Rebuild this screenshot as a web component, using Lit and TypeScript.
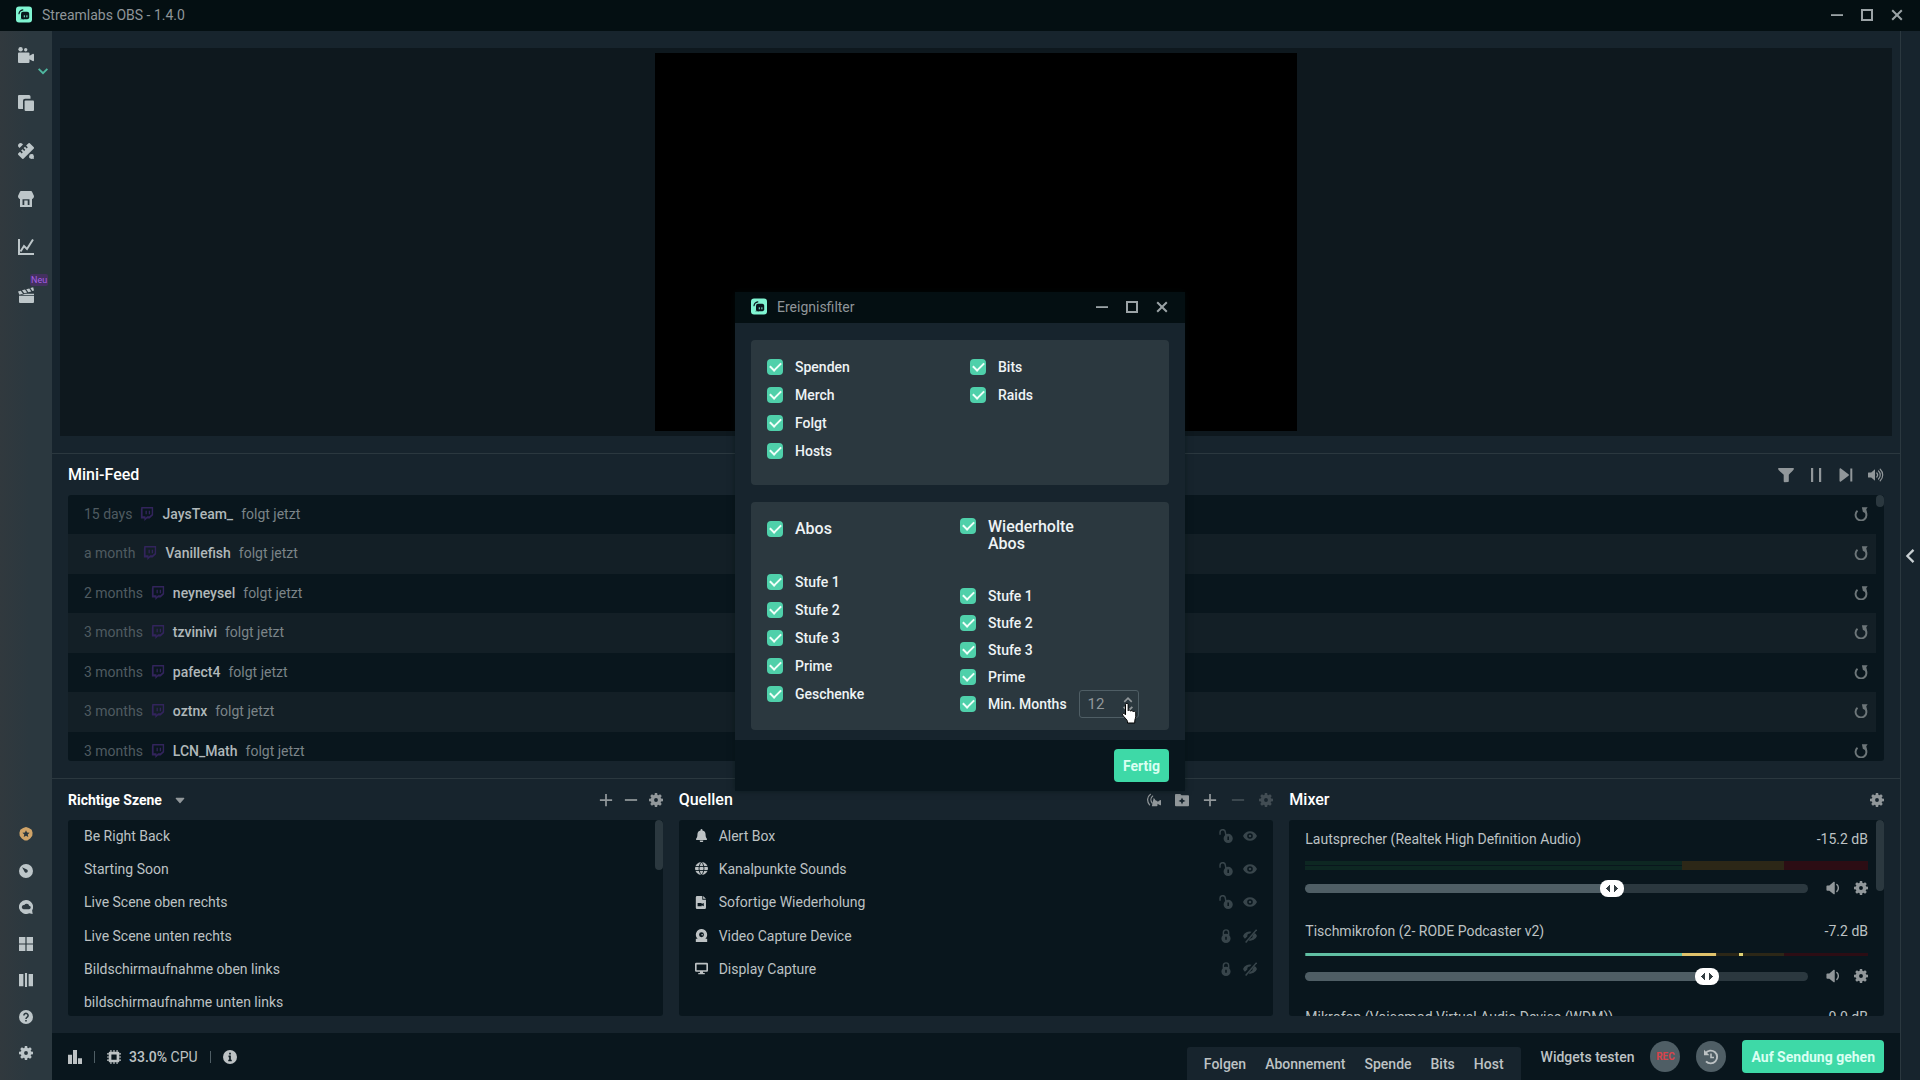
import { LitElement, html, svg, css, TemplateResult, SVGTemplateResult } from "lit";
import { customElement, property } from "lit/decorators.js";
import { classMap } from "lit/directives/class-map.js";

const GEAR = svg`<path fill-rule="evenodd" d="M6.7 0h2.6l.4 2.2 1.1.5 1.9-1.3 1.9 1.9-1.3 1.9.5 1.1 2.2.4v2.6l-2.2.4-.5 1.1 1.3 1.9-1.9 1.9-1.9-1.3-1.1.5-.4 2.2H6.7l-.4-2.2-1.1-.5-1.9 1.3-1.9-1.9 1.3-1.9-.5-1.1L0 9.3V6.7l2.2-.4.5-1.1-1.3-1.9 1.9-1.9 1.9 1.3 1.1-.5zM8 5.8a2.2 2.2 0 1 0 0 4.4 2.2 2.2 0 0 0 0-4.4z"/>`;

/* All glyphs share a 16 by 16 canvas. */
const ICONS: Record<string, SVGTemplateResult> = {
  logo: svg`<rect width="16" height="16" rx="3" fill="#80f5d2"/><path d="M3 7.2A4.5 4.5 0 0 1 6.8 3.3" fill="none" stroke="#09161d" stroke-width="1.2" stroke-linecap="round"/><rect x="5" y="5.2" width="8.2" height="7.6" rx="2" fill="#09161d"/><path d="M4 12.8h4v-2z" fill="#09161d"/><path d="M8.3 8.8v2M10.9 8.8v2" stroke="#80f5d2" stroke-width="1"/>`,
  minimize: svg`<path d="M2 7.2h12v1.8H2z"/>`,
  maximize: svg`<path fill="none" stroke="currentColor" stroke-width="2" d="M3 3h10v10H3z"/>`,
  close: svg`<path fill="none" stroke="currentColor" stroke-width="2" d="M3.2 3.2l9.6 9.6M12.8 3.2l-9.6 9.6"/>`,
  camera: svg`<circle cx="2.6" cy="2.2" r="2.2"/><circle cx="7.7" cy="2.7" r="1.7"/><path d="M1 5.5h9.5a1 1 0 0 1 1 1v2.2L14.6 7c.8-.4 1.4 0 1.4.8v5.4c0 .8-.6 1.2-1.4.8l-3.1-1.7V15a1 1 0 0 1-1 1H1a1 1 0 0 1-1-1V6.500a1 1 0 0 1 1-1z"/>`,
  copy: svg`<path d="M1 0h10a1.500 1.500 0 0 1 1.500 1.500V3.800H7A2 2 0 0 0 5 5.800V14H1a1 1 0 0 1-1-1V1a1 1 0 0 1 1-1z"/><rect x="6.600" y="5.400" width="9.400" height="10.600" rx="1"/>`,
  tools: svg`<path d="M10.300 .4a1.200 1.200 0 0 1 1.700 0l3.600 3.700a1.200 1.200 0 0 1 0 1.700L5.700 15.600a1.200 1.200 0 0 1-1.700 0L.4 12a1.200 1.200 0 0 1 0-1.700L2 8.700l1.700 1.700 1.100-1.100-1.700-1.700 1.400-1.400 1.700 1.700L7.300 6.800 5.600 5.100 7 3.700l1.700 1.700 1.100-1.100L8.100 2.600z"/><path d="M0 2.500A2.500 2.500 0 0 1 4.300.8L5 1.500 1.500 5l-.7-.7A2.500 2.500 0 0 1 0 2.500zM14.500 11l1.500 5-5-1.500z"/><circle cx="13.500" cy="13.500" r="2.400"/>`,
  shop: svg`<path fill-rule="evenodd" d="M3 0h10a1 1 0 0 1 .9.500L16 5c0 1.800-.9 2.800-2 3v7.500a.5.500 0 0 1-.5.500h-11a.5.500 0 0 1-.5-.5V8C.9 7.800 0 6.800 0 5L2.100.5A1 1 0 0 1 3 0zM4.500 8.200V14h1.800V9.500h3.400V14h1.800V8.200z"/>`,
  chart: svg`<path fill="none" stroke="currentColor" stroke-width="2" d="M1 0v15h15M2.500 12.500L6 7l3 3 6-9.500"/>`,
  clapper: svg`<path d="M1 8.800h15V15a1 1 0 0 1-1 1H2a1 1 0 0 1-1-1zM0 4.500l2.800-.8 2.200 3-3.600 1zM4 3.300l3-.8 2.200 3-3 .8zM8.300 2.200l3-.8 2 3-3 .8zM12.400 1l2.800-.7.800 3.200-1.600.4zM3.500 8l4-1.200h8.500V8z"/>`,
  badge: svg`<path fill-rule="evenodd" d="M8 0l3.300 1.200L14.500 3l1 3.500L15.200 10l-2.400 3.200L9.500 15.500H6.500L3.200 13.200.8 10 .5 6.500l1-3.500 3.200-1.800zM8 3.600L6.800 6.300l-2.900.3L6 8.600l-.6 2.900L8 10l2.600 1.500-.6-2.900 2.100-2-2.900-.3z"/>`,
  gauge: svg`<path fill-rule="evenodd" d="M8 0a8 8 0 1 1 0 16A8 8 0 0 1 8 0zM3.500 3.700l2.600 4.500c.3 1.600 2.200 2.300 3.400 1.200 1.200-1.200.5-3.100-1.100-3.400z"/>`,
  cloudchat: svg`<path fill-rule="evenodd" d="M8 0a8 8 0 0 1 7 12l.6 4-4-.9A8 8 0 1 1 8 0zM5.200 10.500h6a2 2 0 0 0 .4-4 3 3 0 0 0-5.500-.8 2.400 2.400 0 0 0-.9 4.800z"/>`,
  grid: svg`<path d="M0 0h7.300v7.300H0zM8.700 0H16v7.300H8.700zM0 8.700h7.300V16H0zM8.700 8.700H16V16H8.700z"/>`,
  columns: svg`<path d="M0 1h5v14H0zM6.800 0h2.400v16H6.800zM11 1h5v14h-5z"/>`,
  help: svg`<circle cx="8" cy="8" r="8"/><path d="M5.600 6.300a2.400 2.400 0 1 1 3.800 1.900C8.400 8.900 8 9.200 8 10.200M8 11.400v1.800" fill="none" stroke="#2b383f" stroke-width="1.800"/>`,
  gear: GEAR,
  filter: svg`<path d="M.8 1h14.400a.8.800 0 0 1 .6 1.300c-1 1.800-2.800 3-5 5.500V14a1 1 0 0 1-.5.900l-3.600.3a1 1 0 0 1-1-1V7.800C3 5.300 1.200 4.100.2 2.300A.8.800 0 0 1 .8 1z"/>`,
  pause: svg`<path d="M3 1h2.200v14H3zM11 1h2.200v14H11z"/>`,
  next: svg`<path d="M1.500 2.200c0-.8.800-1.100 1.400-.7l7.600 5.700c.5.400.5 1.200 0 1.600l-7.600 5.700c-.6.400-1.400.1-1.400-.7zM12.300 1.500h2v13h-2z"/>`,
  volume: svg`<path d="M.5 5.500h2.700L7 2.200v11.600l-3.800-3.300H.5A.5.500 0 0 1 0 10V6a.5.500 0 0 1 .5-.5z"/><path fill="none" stroke="currentColor" stroke-width="1.200" stroke-linecap="round" d="M8.800 6a3 3 0 0 1 0 4M10.500 4a5.500 5.500 0 0 1 0 8M12.200 2.200a8 8 0 0 1 0 11.600"/>`,
  speaker: svg`<path d="M1.500 5h2.300L8.800.9c.5-.4 1.200-.1 1.200.6v13c0 .7-.7 1-1.200.6L3.800 11H1.500A1 1 0 0 1 .5 10V6a1 1 0 0 1 1-1z"/><path fill="none" stroke="currentColor" stroke-width="1.700" stroke-linecap="round" d="M12.400 4a5.500 5.500 0 0 1 0 8"/>`,
  replay: svg`<path fill="none" stroke="currentColor" stroke-width="2.200" d="M4 4.400A6.200 6.200 0 1 0 12.400 4.800"/><path d="M9 .4h6.600L14 2.600 15 7l-4.800-1.200z"/>`,
  twitch: svg`<path fill-rule="evenodd" d="M1.500 0H15v9.500L11 13H8l-3 3v-3H1V3zM3 1.600v9h3.200v1.800l2-1.800h2.500l2.700-2.300V1.600zM6.300 4.300h1.500v4H6.300zM10 4.300h1.500v4H10z"/>`,
  plus: svg`<path d="M7 1h2v6h6v2H9v6H7V9H1V7h6z"/>`,
  minus: svg`<path d="M1 7h14v2H1z"/>`,
  caret: svg`<path d="M3 5h10a.8.800 0 0 1 .6 1.300l-5 5.600a.8.800 0 0 1-1.200 0l-5-5.600A.8.800 0 0 1 3 5z"/>`,
  streamcam: svg`<path fill="none" stroke="currentColor" stroke-width="1.400" stroke-linecap="round" d="M4 1.500C-.2 4.500-.2 10 3 13.500M6.500 3.500C4 5.500 4 9 6 11.500"/><path d="M5.500 15l2.200-9.500L10 8.500l2 .5v1.300l3-2.300c.5-.3 1-.1 1 .5v5c0 .6-.5.800-1 .5l-3-1.800V14a1 1 0 0 1-1 1z"/>`,
  folderplus: svg`<path fill-rule="evenodd" d="M1 1h5l1.500 1.500H15a1 1 0 0 1 1 1V14a1 1 0 0 1-1 1H1a1 1 0 0 1-1-1V2a1 1 0 0 1 1-1zM8 5L6.800 7.800 4 9l2.800 1.200L8 13l1.200-2.800L12 9 9.200 7.800z"/>`,
  bell: svg`<path d="M8 0a1.200 1.200 0 0 1 1.200 1.200v.6A4.800 4.800 0 0 1 13 6.500c0 3.500.8 4.600 1.600 5.400.6.700.2 1.600-.6 1.600H2c-.8 0-1.200-.9-.6-1.600C2.200 11.100 3 10 3 6.500a4.800 4.800 0 0 1 3.800-4.700v-.6A1.200 1.200 0 0 1 8 0zM5.800 14.200h4.400a2.200 2.200 0 0 1-4.400 0z"/>`,
  globe: svg`<circle cx="8" cy="8" r="8"/><path fill="none" stroke="#09161d" stroke-width="1.100" d="M0 5.500h16M0 10.500h16M8 0C4 4 4 12 8 16M8 0c4 4 4 12 0 16"/>`,
  filevideo: svg`<path fill-rule="evenodd" d="M2.500 0H9v4.500h4.500v10a1.500 1.500 0 0 1-1.500 1.500H2.500A1.500 1.500 0 0 1 1 14.500v-13A1.500 1.500 0 0 1 2.500 0zM10 0l3.500 3.500H10zM3.200 8.500v4.200h5v-1.400l2.600 1.400V8.500L8.200 9.900V8.500z"/>`,
  webcam: svg`<path fill-rule="evenodd" d="M8 0a7 7 0 0 1 4.800 12H15v4H1v-4h2.200A7 7 0 0 1 8 0zM8 4a3 3 0 1 0 0 6 3 3 0 0 0 0-6z"/><circle cx="8.800" cy="7" r="1"/>`,
  display: svg`<path fill-rule="evenodd" d="M1.500 1h13A1.500 1.500 0 0 1 16 2.500v8a1.500 1.500 0 0 1-1.500 1.500H9.700l.4 1.500H12V15H4v-1.500h1.900l.4-1.500H1.500A1.500 1.500 0 0 1 0 10.500v-8A1.500 1.500 0 0 1 1.500 1zM2 3v7h12V3z"/>`,
  unlock: svg`<path fill="none" stroke="currentColor" stroke-width="1.700" d="M1.200 6.500V4a3 3 0 0 1 6-.5l.8 4"/><path fill-rule="evenodd" d="M10.500 5.500a5.200 5.200 0 1 1 0 10.500 5.200 5.200 0 0 1 0-10.500zM9.600 8.500v4h1.800v-4z"/>`,
  lock: svg`<path fill="none" stroke="currentColor" stroke-width="1.700" d="M5 7V4a3 3 0 0 1 6 0v3"/><path fill-rule="evenodd" d="M8 5.500A5.200 5.200 0 1 1 8 16 5.200 5.200 0 0 1 8 5.500zM7.100 8.800v3.600h1.800V8.800z"/>`,
  eye: svg`<path fill-rule="evenodd" d="M8 2.500c3.500 0 6.500 2.200 8 5.500-1.500 3.300-4.500 5.500-8 5.500S1.500 11.300 0 8c1.500-3.300 4.500-5.500 8-5.500zM8 4.800a3.200 3.200 0 1 0 0 6.400 3.200 3.200 0 0 0 0-6.400zm0 1.700a1.500 1.500 0 1 1 0 3 1.500 1.500 0 0 1 0-3z"/>`,
  eyeoff: svg`<path d="M9.800 3.200A8 8 0 0 0 0 8c.5 1.200 1.300 2.200 2.200 3.100L5 8.600A3 3 0 0 1 8 5.200zM13.400 4.600L10.900 7.500A3 3 0 0 1 8 11l-1.700 2A8 8 0 0 0 16 8a9 9 0 0 0-2.600-3.400z"/><path stroke="currentColor" stroke-width="1.700" d="M3 15.500L15.500.8"/>`,
  bars: svg`<path d="M0 5.500h4.600V16H0zM5.700 0h4.600v16H5.700zM11.400 9.500H16V16h-4.600z"/>`,
  chip: svg`<path fill-rule="evenodd" d="M3 2h10a1 1 0 0 1 1 1v10a1 1 0 0 1-1 1H3a1 1 0 0 1-1-1V3a1 1 0 0 1 1-1zM5 5v6h6V5z"/><path stroke="currentColor" stroke-width="1.300" d="M4.500 0v3M8 0v3M11.500 0v3M4.500 13v3M8 13v3M11.500 13v3M0 4.500h3M0 8h3M0 11.500h3M13 4.500h3M13 8h3M13 11.500h3"/>`,
  info: svg`<circle cx="8" cy="8" r="8"/><path fill="none" stroke="#09161d" stroke-width="1.900" d="M8 3v2M6.300 7.300H8v4.500M6 12h4"/>`,
  history: svg`<path fill="none" stroke="currentColor" stroke-width="1.900" d="M2.500 4.300A6.400 6.400 0 1 1 3 12.300"/><path d="M1 .8v5.400h5.400z"/><path fill="none" stroke="currentColor" stroke-width="1.600" d="M8 4.500v4h3"/>`,
  chevrondown: svg`<path fill="none" stroke="currentColor" stroke-width="3" d="M1 4.500l7 7 7-7"/>`,
  chevronup: svg`<path fill="none" stroke="currentColor" stroke-width="2.600" d="M2 11l6-6 6 6"/>`,
  chevronleft: svg`<path fill="none" stroke="currentColor" stroke-width="2.600" d="M12 1L5 8l7 7"/>`,
  hand: svg`<path fill="#fff" stroke="#000" stroke-width=".8" stroke-linejoin="round" d="M4.400 1.200c0-1.200 2.100-1.200 2.100 0v5c.2-.8 2-.7 2 .3.300-.7 2-.6 2 .5.400-.6 2.100-.4 2.100.8v3.300c0 1-.8 1.900-.8 3V16H6v-1.300c0-1-3.500-4.200-4-5.200-.4-1 .8-1.600 1.600-.9l.8.800z"/>`,
};

const icon = (name: string): TemplateResult =>
  html`<svg class="icon" viewBox="0 0 16 16" fill="currentColor" aria-hidden="true">${ICONS[name]}</svg>`;

const iconButton = (name: string, label: string, cls = ""): TemplateResult =>
  html`<button type="button" class="icon-btn ${cls}" aria-label=${label}>${icon(name)}</button>`;

const base = css`
  * { box-sizing: border-box; }
  button, input, select { font: inherit; color: inherit; margin: 0; padding: 0; border: 0; background: none; }
  ul { list-style: none; margin: 0; padding: 0; }
  h2, h3, p { margin: 0; font: inherit; }
  .icon { display: block; width: 16px; height: 16px; flex: none; }
  .icon-btn { display: block; flex: none; cursor: pointer; }
  .small .icon, .icon-btn.small .icon { width: 14px; height: 14px; }
`;

@customElement("title-bar")
class TitleBar extends LitElement {
  @property() heading = "";

  static styles = [base, css`
    :host { box-sizing: border-box; display: flex; align-items: center; height: 31px; flex: none; padding: 0 15px 2px 16px; background: #040f12; color: #8f9599; }
    .logo .icon { height: 17px; }
    .heading { flex: 1; margin-left: 10px; }
    .controls { display: flex; gap: 14px; color: #9ba3a6; }
  `];

  render() {
    return html`
      <span class="logo">${icon("logo")}</span>
      <h2 class="heading">${this.heading}</h2>
      <div class="controls">
        ${iconButton("minimize", "Minimieren")}
        ${iconButton("maximize", "Maximieren")}
        ${iconButton("close", "Schließen")}
      </div>`;
  }
}

@customElement("side-nav")
class SideNav extends LitElement {
  static styles = [base, css`
    :host { display: flex; flex-direction: column; justify-content: space-between; flex: none; width: 52px; padding: 16px 0 20px; background: linear-gradient(90deg, #31393e, #2b383f 30px); color: #bdc6c9; }
    .group { display: flex; flex-direction: column; align-items: center; }
    .top { gap: 32px; }
    .bottom { height: 233px; justify-content: space-between; }
    .entry { position: relative; }
    .mark { position: absolute; top: 19px; left: 20px; color: #4fb8a0; }
    .mark .icon { width: 10px; height: 10px; }
    .tag { position: absolute; top: -13px; left: 12px; padding: 0 1px; border-radius: 2px; background: #443060; color: #a45fe6; font-size: 9px; line-height: 12px; }
    .gold { color: #d0a468; }
  `];

  render() {
    return html`
      <nav class="group top" aria-label="Navigation">
        <div class="entry">${iconButton("camera", "Editor")}<span class="mark">${icon("chevrondown")}</span></div>
        ${iconButton("copy", "Layout")}
        ${iconButton("tools", "Themes")}
        ${iconButton("shop", "App Store")}
        ${iconButton("chart", "Statistik")}
        <div class="entry">${iconButton("clapper", "Highlighter")}<span class="tag">Neu</span></div>
      </nav>
      <nav class="group bottom small" aria-label="Werkzeuge">
        ${iconButton("badge", "Prime", "gold")}
        ${iconButton("gauge", "Dashboard")}
        ${iconButton("cloudchat", "Cloudbot")}
        ${iconButton("grid", "Layout-Editor")}
        ${iconButton("columns", "Studio-Modus")}
        ${iconButton("help", "Hilfe")}
        ${iconButton("gear", "Einstellungen")}
      </nav>`;
  }
}

const FEED = [
  ["15 days", "JaysTeam_"],
  ["a month", "Vanillefish"],
  ["2 months", "neyneysel"],
  ["3 months", "tzvinivi"],
  ["3 months", "pafect4"],
  ["3 months", "oztnx"],
  ["3 months", "LCN_Math"],
];

@customElement("mini-feed")
class MiniFeed extends LitElement {
  static styles = [base, css`
    :host { display: block; flex: none; padding: 0 16px 17px; border-top: 1px solid #2b383f; }
    .head { display: flex; align-items: center; justify-content: space-between; height: 41px; }
    .title { color: #fff; font-size: 16px; font-weight: 500; }
    .actions { display: flex; gap: 14px; color: #91979a; }
    .body { display: flex; height: 266px; overflow: hidden; border-radius: 3px; background: #09161d; }
    .list { flex: 1; }
    .row { display: flex; align-items: center; gap: 8px; height: 39px; padding: 0 8px 2px 16px; color: #7b8488; }
    .row:nth-child(even) { height: 40px; background: #131f26; }
    .time { color: #4f5b61; }
    .platform { color: #32245c; }
    .name { color: #b0b8ba; font-weight: 500; }
    .text { flex: 1; }
    .again { color: #6d7679; }
    .thumb { width: 8px; height: 12px; border-radius: 4px; background: #2b383f; }
  `];

  render() {
    return html`
      <div class="head">
        <h2 class="title">Mini-Feed</h2>
        <div class="actions">
          ${iconButton("filter", "Filter")}
          ${iconButton("pause", "Pause")}
          ${iconButton("next", "Überspringen")}
          ${iconButton("volume", "Ton")}
        </div>
      </div>
      <div class="body">
        <ul class="list">
          ${FEED.map(([time, name]) => html`
            <li class="row small">
              <span class="time">${time}</span>
              <span class="platform">${icon("twitch")}</span>
              <span class="name">${name}</span>
              <span class="text">folgt jetzt</span>
              ${iconButton("replay", "Wiederholen", "again")}
            </li>`)}
        </ul>
        <div class="thumb"></div>
      </div>`;
  }
}

const SCENES = [
  "Be Right Back",
  "Starting Soon",
  "Live Scene oben rechts",
  "Live Scene unten rechts",
  "Bildschirmaufnahme oben links",
  "bildschirmaufnahme unten links",
];

const SOURCES = [
  { icon: "bell", name: "Alert Box", on: true },
  { icon: "globe", name: "Kanalpunkte Sounds", on: true },
  { icon: "filevideo", name: "Sofortige Wiederholung", on: true },
  { icon: "webcam", name: "Video Capture Device", on: false },
  { icon: "display", name: "Display Capture", on: false },
];

const CHANNELS = [
  { name: "Lautsprecher (Realtek High Definition Audio)", db: "-15.2 dB", volume: 61.6, stereo: true, level: 0, peak: 0 },
  { name: "Tischmikrofon (2- RODE Podcaster v2)", db: "-7.2 dB", volume: 81.4, stereo: false, level: 73, peak: 77 },
  { name: "Mikrofon (Voicemod Virtual Audio Device (WDM))", db: "0.0 dB", volume: 100, stereo: false, level: 0, peak: 0 },
];

@customElement("studio-panels")
class StudioPanels extends LitElement {
  static styles = [base, css`
    :host { display: grid; grid-template-columns: repeat(3, minmax(0, 1fr)); gap: 16px; flex: none; padding: 0 16px 17px; border-top: 1px solid #2b383f; }
    .head { display: flex; align-items: center; justify-content: space-between; height: 41px; color: #91979a; }
    .title { color: #fff; font-size: 16px; font-weight: 500; }
    .picker { display: flex; align-items: center; gap: 12px; }
    .scene-select { appearance: none; field-sizing: content; color: #fff; font-weight: 700; }
    .picker .icon { width: 12px; height: 12px; }
    .actions { display: flex; gap: 11px; }
    .actions.wide { gap: 14px; }
    .off { opacity: .35; }
    .body { display: flex; height: 196px; overflow: hidden; border-radius: 3px; background: #09161d; color: #bdc2c4; }
    .list { flex: 1; min-width: 0; }
    .row { display: flex; align-items: center; height: 33px; padding: 0 16px 2px; }
    .row:nth-child(3n) { height: 34px; }
    .row > .icon { width: 13px; height: 13px; }
    .source-name { flex: 1; margin-left: 11px; }
    .flags { display: flex; gap: 10px; color: #38454b; }
    .thumb { width: 8px; height: 50px; border-radius: 4px; background: #2b383f; }
    .thumb.long { height: 71px; }
    .channels { flex: 1; min-width: 0; padding: 10px 8px 0 16px; }
    .channel { display: flex; flex-direction: column; height: 86px; }
    .channel.stereo { height: 92px; }
    .labels { display: flex; justify-content: space-between; line-height: 18px; }
    .meters { display: flex; flex-direction: column; gap: 2px; margin-top: 13px; }
    .stereo .meters { gap: 1px; background: linear-gradient(90deg, transparent 67%, #2c2717 67% 85%, #2c0d14 85%); }
    .meter { position: relative; height: 3px; background: linear-gradient(90deg, #0d2722 67%, #2c2717 67% 85%, #2c0d14 85%); }
    .stereo .meter { height: 4px; }
    .scale { position: absolute; inset: 0; background: linear-gradient(90deg, #60bfa3 67%, #e0c26b 67%); }
    .peak { position: absolute; top: 0; width: 4px; height: 100%; background: #e0d274; }
    .controls { display: flex; align-items: center; margin-top: 10px; height: 20px; color: #91979a; }
    .stereo .controls { margin-top: 8px; }
    .slider { appearance: none; flex: 1; min-width: 0; height: 18px; margin-right: 18px; }
    .slider::-webkit-slider-runnable-track { height: 9px; border-radius: 5px; background: linear-gradient(90deg, #4f5e65 var(--volume), #2b383f var(--volume)); }
    .slider::-webkit-slider-thumb {
      appearance: none; width: 24px; height: 17px; margin-top: -4px; border-radius: 8px;
      background:
        conic-gradient(from 45deg at 0 50%, #333d42 90deg, transparent 0) 6px 5px / 4px 7px no-repeat,
        conic-gradient(from 225deg at 100% 50%, #333d42 90deg, transparent 0) 14px 5px / 4px 7px no-repeat,
        #fff;
    }
    .tune { display: flex; gap: 14px; }
  `];

  private channel(c: (typeof CHANNELS)[number], i: number) {
    const bars = c.stereo ? [0, 1] : [0];
    return html`
      <li class=${classMap({ channel: true, stereo: c.stereo })}>
        <div class="labels"><label for="volume-${i}">${c.name}</label><span>${c.db}</span></div>
        <div class="meters">
          ${bars.map(() => html`
            <div class="meter">
              ${c.level ? html`
                <div class="scale" style="clip-path: inset(0 ${100 - c.level}% 0 0)"></div>
                <div class="peak" style="left: ${c.peak}%"></div>` : ""}
            </div>`)}
        </div>
        <div class="controls small">
          <input id="volume-${i}" class="slider" type="range" min="0" max="100" step="0.1" .value=${String(c.volume)} style="--volume: ${c.volume}%">
          <div class="tune">${iconButton("speaker", "Stumm")}${iconButton("gear", "Einstellungen")}</div>
        </div>
      </li>`;
  }

  render() {
    return html`
      <section>
        <div class="head">
          <div class="picker">
            <select class="scene-select" aria-label="Szenensammlung"><option>Richtige Szene</option></select>
            ${icon("caret")}
          </div>
          <div class="actions small">
            ${iconButton("plus", "Szene hinzufügen")}
            ${iconButton("minus", "Szene entfernen")}
            ${iconButton("gear", "Szene einstellen")}
          </div>
        </div>
        <div class="body">
          <ul class="list">${SCENES.map((s) => html`<li class="row">${s}</li>`)}</ul>
          <div class="thumb"></div>
        </div>
      </section>
      <section>
        <div class="head">
          <h2 class="title">Quellen</h2>
          <div class="actions wide small">
            ${iconButton("streamcam", "Kamera")}
            ${iconButton("folderplus", "Gruppe hinzufügen")}
            ${iconButton("plus", "Quelle hinzufügen")}
            ${iconButton("minus", "Quelle entfernen", "off")}
            ${iconButton("gear", "Quelle einstellen", "off")}
          </div>
        </div>
        <div class="body">
          <ul class="list">
            ${SOURCES.map((s) => html`
              <li class="row small">
                ${icon(s.icon)}
                <span class="source-name">${s.name}</span>
                <span class="flags">
                  ${iconButton(s.on ? "unlock" : "lock", "Sperren")}
                  ${iconButton(s.on ? "eye" : "eyeoff", "Sichtbarkeit")}
                </span>
              </li>`)}
          </ul>
        </div>
      </section>
      <section>
        <div class="head">
          <h2 class="title">Mixer</h2>
          <div class="actions small">${iconButton("gear", "Mixer einstellen")}</div>
        </div>
        <div class="body">
          <ul class="channels">${CHANNELS.map((c, i) => this.channel(c, i))}</ul>
          <div class="thumb long"></div>
        </div>
      </section>`;
  }
}

@customElement("status-bar")
class StatusBar extends LitElement {
  static styles = [base, css`
    :host { display: flex; align-items: center; justify-content: space-between; flex: none; height: 47px; padding: 0 16px; background: #09161d; color: #bdc2c4; }
    .stats, .live { display: flex; align-items: center; }
    .stats { gap: 12px; }
    .sep { width: 1px; height: 12px; background: #4f5e65; }
    .cpu { display: flex; align-items: center; gap: 8px; }
    .value { font-weight: 500; }
    .live { gap: 16px; height: 100%; font-weight: 500; }
    .tests { display: flex; gap: 19px; align-self: flex-end; height: 33px; padding: 0 17px; align-items: center; border-radius: 3px 3px 0 0; background: #17242d; }
    .tests + .label { margin-left: 4px; }
    .round { display: grid; place-items: center; width: 30px; height: 31px; border-radius: 50%; background: #4f5e65; }
    .rec { color: #d8434b; font-size: 10px; font-weight: 700; }
    .go { height: 33px; padding: 0 9px; border-radius: 4px; background: #3ed9a7; color: #d9fff2; font-weight: 700; }
  `];

  render() {
    return html`
      <div class="stats small">
        ${iconButton("bars", "Leistung")}
        <span class="sep"></span>
        <span class="cpu">${icon("chip")}<span><span class="value">33.0%</span> CPU</span></span>
        <span class="sep"></span>
        ${iconButton("info", "Information")}
      </div>
      <div class="live">
        <div class="tests">
          ${["Folgen", "Abonnement", "Spende", "Bits", "Host"].map((t) => html`<button type="button">${t}</button>`)}
        </div>
        <button type="button" class="label">Widgets testen</button>
        <button type="button" class="round rec">REC</button>
        <button type="button" class="round" aria-label="Replay-Puffer">${icon("history")}</button>
        <button type="button" class="go">Auf Sendung gehen</button>
      </div>`;
  }
}

@customElement("event-filter")
class EventFilter extends LitElement {
  static styles = [base, css`
    :host { display: flex; flex-direction: column; background: #17242d; color: #eef3f5; box-shadow: 0 0 6px rgba(4, 15, 18, .5); }
    .content { display: flex; flex-direction: column; gap: 17px; padding: 17px 16px 10px; }
    .card { display: flex; border-radius: 4px; background: #2b383f; }
    .general { height: 145px; padding: 19px 16px; gap: 29px; }
    .subs { padding: 16px 16px 18px; gap: 19px; }
    .column { display: flex; flex-direction: column; gap: 12px; width: 174px; }
    .subs .dense { gap: 11px; width: auto; }
    .check { display: flex; align-items: center; height: 16px; gap: 12px; font-weight: 500; }
    .check.lead { height: 22px; margin-bottom: 22px; font-size: 16px; }
    .check.lead.tall { align-items: flex-start; width: 150px; height: 47px; margin-bottom: 12px; line-height: 17px; }
    .box { appearance: none; flex: none; width: 16px; height: 16px; border-radius: 4px; background: #4fd0aa; display: grid; place-items: center; }
    .box:checked::before { content: ""; width: 9px; height: 5px; margin-top: -3px; border: solid #effff9; border-width: 0 0 2px 2px; transform: rotate(-45deg); }
    .months { display: flex; align-items: center; gap: 12px; height: 16px; }
    .number { position: relative; width: 60px; height: 28px; flex: none; color: #91979a; }
    .field { width: 100%; height: 100%; padding: 0 22px 0 8px; border: 1px solid #4f5e65; border-radius: 3px; font-size: 15px; appearance: textfield; }
    .field::-webkit-inner-spin-button { appearance: none; }
    .step { position: absolute; right: 6px; }
    .step .icon { width: 10px; height: 10px; }
    .up { top: 5px; }
    .down { bottom: 4px; }
    .pointer { position: absolute; top: 12px; left: 41px; }
    .pointer .icon { width: 20px; height: 22px; }
    .foot { display: flex; justify-content: flex-end; align-items: center; height: 51px; padding: 0 16px; background: #09161d; }
    .done { height: 33px; padding: 0 9px; border-radius: 4px; background: #3ed9a7; color: #d9fff2; font-weight: 700; }
  `];

  private check(label: string, id: string, cls = "") {
    return html`
      <div class="check ${cls}">
        <input class="box" type="checkbox" id=${id} checked>
        <label for=${id}>${label}</label>
      </div>`;
  }

  render() {
    return html`
      <title-bar heading="Ereignisfilter"></title-bar>
      <div class="content">
        <div class="card general">
          <div class="column">${["Spenden", "Merch", "Folgt", "Hosts"].map((t) => this.check(t, `g-${t}`))}</div>
          <div class="column">${["Bits", "Raids"].map((t) => this.check(t, `g-${t}`))}</div>
        </div>
        <div class="card subs">
          <div class="column">
            ${this.check("Abos", "abos", "lead")}
            ${["Stufe 1", "Stufe 2", "Stufe 3", "Prime", "Geschenke"].map((t, i) => this.check(t, `s-${i}`))}
          </div>
          <div class="column dense">
            ${this.check("Wiederholte Abos", "resubs", "lead tall")}
            ${["Stufe 1", "Stufe 2", "Stufe 3", "Prime"].map((t, i) => this.check(t, `r-${i}`))}
            <div class="months">
              ${this.check("Min. Months", "min-months")}
              <div class="number">
                <input class="field" type="number" value="12" aria-label="Monate">
                <span class="step up">${icon("chevronup")}</span>
                <span class="step down">${icon("chevrondown")}</span>
                <span class="pointer">${icon("hand")}</span>
              </div>
            </div>
          </div>
        </div>
      </div>
      <div class="foot"><button type="button" class="done">Fertig</button></div>`;
  }
}

@customElement("app-root")
class AppRoot extends LitElement {
  static styles = [base, css`
    :host { position: relative; display: flex; flex-direction: column; height: 100vh; overflow: hidden; background: #17242d; font: 14px/18px Roboto, "Liberation Sans", sans-serif; }
    .workspace { display: flex; flex: 1; min-height: 0; }
    .main { display: flex; flex-direction: column; flex: 1; min-width: 0; }
    .preview { display: flex; justify-content: center; flex: 1; min-height: 0; margin: 17px 8px; padding: 5px; background: #0e181e; }
    .canvas { aspect-ratio: 17 / 10; height: 100%; background: #000; }
    .chat { display: flex; flex: none; align-items: center; width: 20px; border-left: 1px solid #2b383f; color: #c9d0d3; }
    .chat .icon { width: 18px; height: 14px; }
    .dialog { position: absolute; top: 292px; left: 0; right: 0; width: 450px; margin: 0 auto; }
  `];

  render() {
    return html`
      <title-bar heading="Streamlabs OBS - 1.4.0"></title-bar>
      <div class="workspace">
        <side-nav></side-nav>
        <main class="main">
          <div class="preview"><div class="canvas"></div></div>
          <mini-feed></mini-feed>
          <studio-panels></studio-panels>
          <status-bar></status-bar>
        </main>
        <aside class="chat">${iconButton("chevronleft", "Chat öffnen")}</aside>
      </div>
      <event-filter class="dialog" role="dialog" aria-label="Ereignisfilter"></event-filter>`;
  }
}
